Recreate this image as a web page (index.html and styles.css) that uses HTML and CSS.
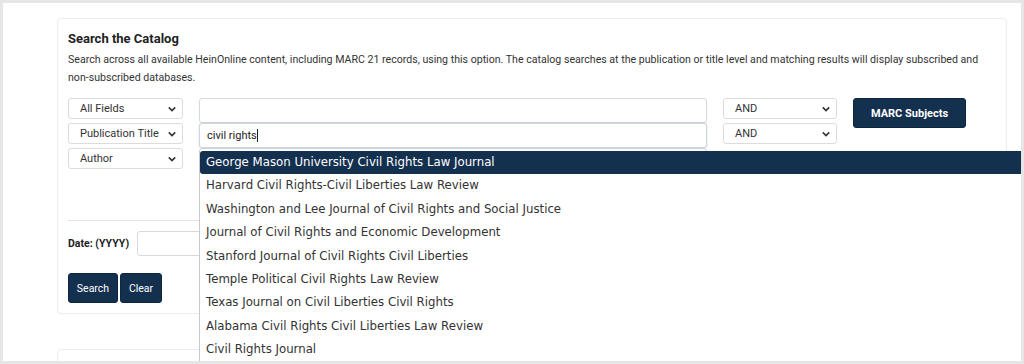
FILE: index.html
```html
<!DOCTYPE html>
<html lang="en">
<head>
  <meta charset="UTF-8" />
  <title>Search the Catalog</title>
  <link rel="stylesheet" href="styles.css">
</head>
<body>
  <div class="frame">
    <!-- ========== CATALOG SEARCH CARD ========== -->
    <div class="card">
      <h2 class="card-title">Search the Catalog</h2>
      <p class="card-desc">Search across all available HeinOnline content, including MARC 21 records, using this option. The catalog searches at the publication or title level and matching results will display subscribed and non-subscribed databases.</p>

      <div class="search-grid">
        <div class="select"><span>All Fields</span><svg class="chev" viewBox="0 0 10 6"><path d="M1 1l4 4 4-4"/></svg></div>
        <div class="text-input"></div>
        <div class="select"><span>AND</span><svg class="chev" viewBox="0 0 10 6"><path d="M1 1l4 4 4-4"/></svg></div>
        <button class="btn btn-marc">MARC Subjects</button>

        <div class="select"><span>Publication Title</span><svg class="chev" viewBox="0 0 10 6"><path d="M1 1l4 4 4-4"/></svg></div>
        <div class="text-input focus-wrap">
          <span>civil rights</span><span class="caret"></span>
          <!-- autocomplete suggestions -->
          <ul class="suggest">
            <li class="active">George Mason University Civil Rights Law Journal</li>
            <li>Harvard Civil Rights-Civil Liberties Law Review</li>
            <li>Washington and Lee Journal of Civil Rights and Social Justice</li>
            <li>Journal of Civil Rights and Economic Development</li>
            <li>Stanford Journal of Civil Rights Civil Liberties</li>
            <li>Temple Political Civil Rights Law Review</li>
            <li>Texas Journal on Civil Liberties Civil Rights</li>
            <li>Alabama Civil Rights Civil Liberties Law Review</li>
            <li>Civil Rights Journal</li>
          </ul>
        </div>
        <div class="select"><span>AND</span><svg class="chev" viewBox="0 0 10 6"><path d="M1 1l4 4 4-4"/></svg></div>
        <div></div>

        <div class="select"><span>Author</span><svg class="chev" viewBox="0 0 10 6"><path d="M1 1l4 4 4-4"/></svg></div>
        <div class="text-input"></div>
      </div>

      <hr class="divider">

      <div class="date-row">
        <label class="date-label">Date: (YYYY)</label>
        <div class="text-input date-input"></div>
      </div>

      <div class="actions">
        <button class="btn btn-search">Search</button>
        <button class="btn btn-clear">Clear</button>
      </div>
    </div>

    <div class="card card-next"></div>
  </div>
</body>
</html>
```

FILE: styles.css
```css
* {
  margin: 0;
  padding: 0;
  box-sizing: border-box;
}

body {
  font-family: 'Roboto', 'Liberation Sans', sans-serif;
  color: #222;
  background: #fff;
  width: 1024px;
  height: 364px;
  overflow: hidden;
}

/* outer screenshot frame */
.frame {
  width: 1024px;
  height: 364px;
  border: 3px solid #e6e6e6;
  background: #fff;
  overflow: hidden;
  padding: 15px 0 0 54px;
}

/* =========================================
   CARD
   ========================================= */
.card {
  width: 950px;
  border: 1px solid #ececec;
  border-radius: 4px;
  padding: 11px 10px 10px 10px;
  background: #fff;
}

.card-next {
  margin-top: 35px;
  height: 40px;
}

.card-title {
  font-size: 13px;
  font-weight: 700;
  line-height: 18px;
  color: #222;
}

.card-desc {
  margin-top: 3px;
  font-size: 10.6px;
  line-height: 18px;
  color: #333;
  padding-right: 10px;
}

/* =========================================
   SEARCH ROWS
   ========================================= */
.search-grid {
  margin-top: 11px;
  display: grid;
  grid-template-columns: 115px 508px 114px 113px;
  grid-auto-rows: 25px;
  column-gap: 16px;
  align-items: start;
}

.select {
  height: 21px;
  border: 1px solid #dcdcdc;
  border-radius: 3px;
  display: flex;
  align-items: center;
  justify-content: space-between;
  padding: 0 6px 0 11px;
  font-size: 11px;
  color: #333;
  background: #fff;
}

.chev {
  width: 8px;
  height: 6px;
  fill: none;
  stroke: #333;
  stroke-width: 2;
}

.text-input {
  height: 25px;
  border: 1px solid #d6d9de;
  border-radius: 3px;
  background: #fff;
  font-size: 11px;
  color: #222;
  display: flex;
  align-items: center;
  padding-left: 7px;
}

.focus-wrap {
  position: relative;
  border-color: #cfd6e0;
  box-shadow: 0 0 2px rgba(120, 140, 170, 0.35);
  z-index: 2;
}

.caret {
  width: 1px;
  height: 13px;
  background: #222;
}

.btn {
  background: #14304f;
  color: #fff;
  border: 1px solid #0f2640;
  border-radius: 3px;
  font-family: 'Roboto', 'Liberation Sans', sans-serif;
  font-size: 10.5px;
  height: 30px;
  padding: 0 8px;
}

.btn-search {
  width: 50px;
  padding: 0;
}

.btn-clear {
  width: 42px;
  padding: 0;
}

.btn-marc {
  width: 113px;
  font-size: 11px;
  font-weight: 700;
}

/* =========================================
   AUTOCOMPLETE LIST
   ========================================= */
.suggest {
  position: absolute;
  top: 27px;
  left: -1px;
  width: 824px;
  list-style: none;
  background: #fff;
  border-left: 1px solid #c9c9c9;
  font-family: 'DejaVu Sans', Verdana, sans-serif;
  font-size: 11.75px;
  color: #333;
}

.suggest li {
  height: 23.4px;
  line-height: 23.4px;
  padding-left: 6px;
  white-space: nowrap;
}

.suggest li.active {
  background: #14304f;
  color: #fff;
  border-radius: 3px 0 0 3px;
}

/* =========================================
   DATE + ACTIONS
   ========================================= */
.divider {
  margin-top: 47px;
  border: 0;
  border-top: 1px solid #e2e2e2;
}

.date-row {
  margin-top: 10px;
  display: flex;
  align-items: center;
  gap: 8px;
}

.date-label {
  font-size: 10.5px;
  font-weight: 700;
  color: #222;
}

.date-input {
  width: 240px;
}

.actions {
  margin-top: 17px;
  display: flex;
  gap: 2px;
}
```
